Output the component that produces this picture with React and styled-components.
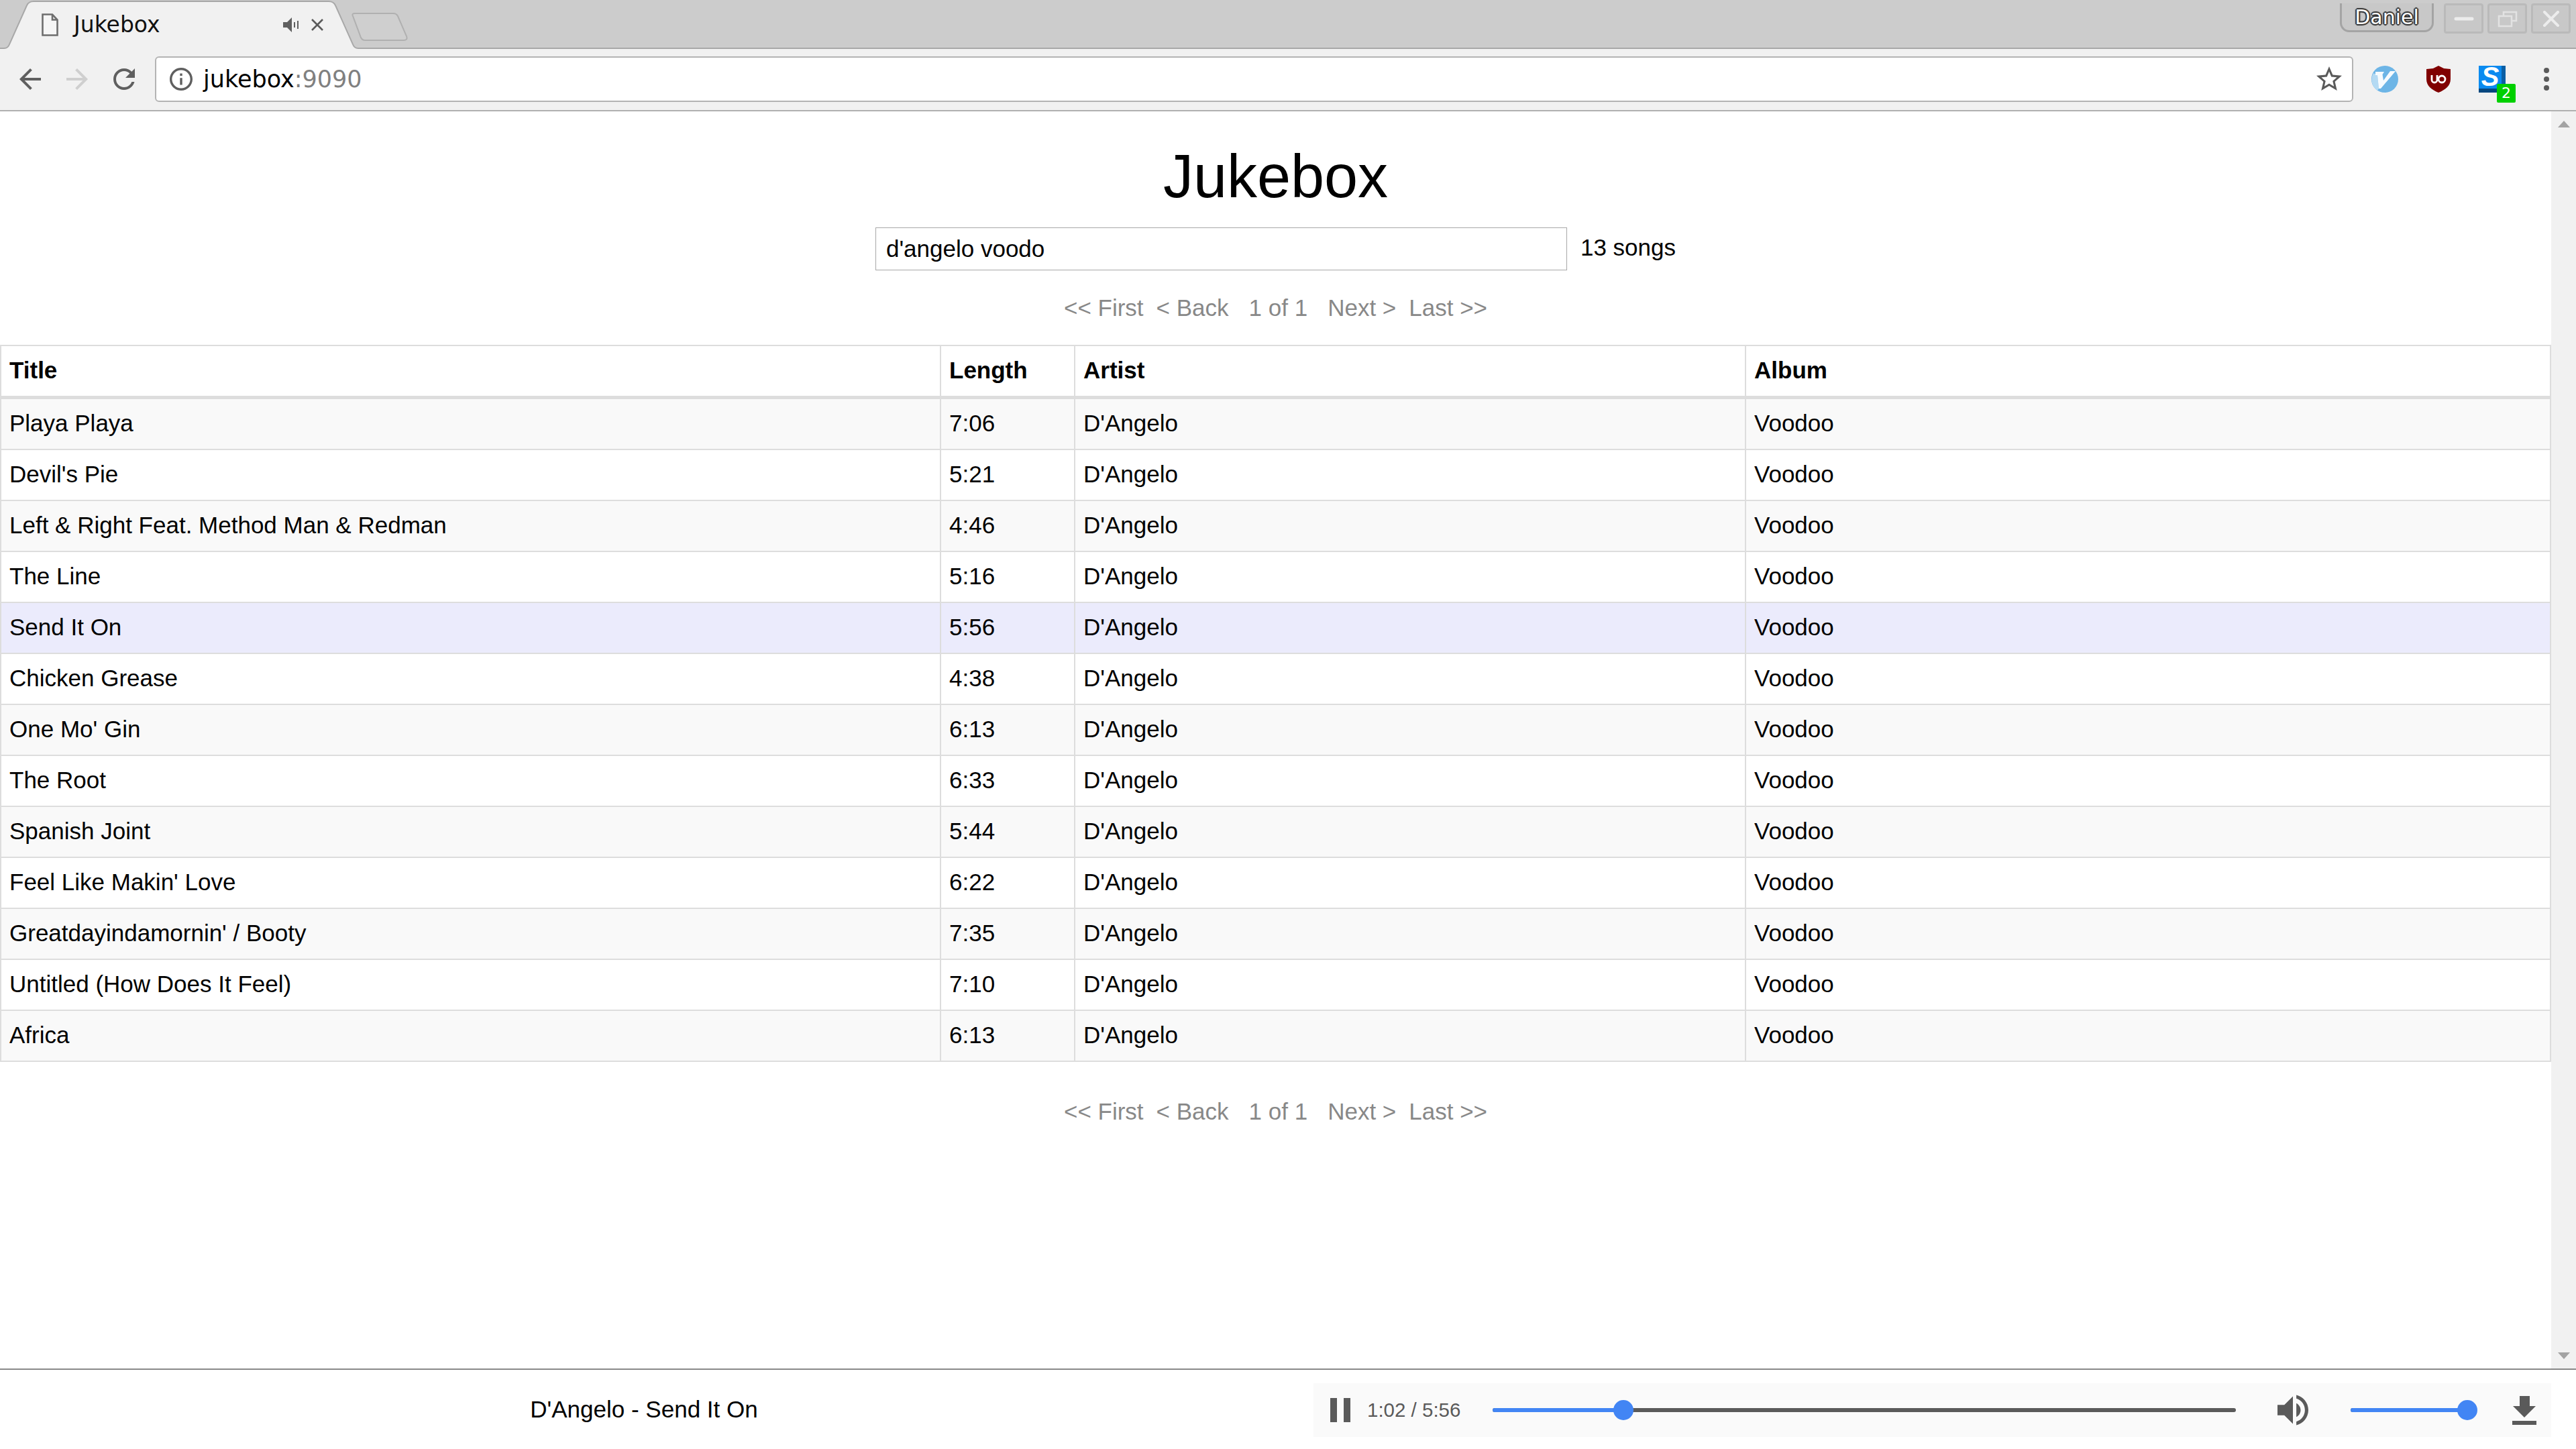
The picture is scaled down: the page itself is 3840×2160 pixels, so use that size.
import React from "react";
import styled, { createGlobalStyle } from "styled-components";

const Global = createGlobalStyle`
  html, body { margin: 0; padding: 0; background: #fff; }
  * { box-sizing: border-box; }
`;

const Shell = styled.div`
  width: 3840px;
  height: 2160px;
  display: flex;
  flex-direction: column;
  overflow: hidden;
  font-family: "Liberation Sans", Arial, sans-serif;
  font-size: 35px;
  color: #000;
`;

/* ---- Browser chrome ---- */
const TabStrip = styled.div`
  height: 73px;
  flex: none;
  display: flex;
  align-items: flex-start;
  background: #cccccc;
  border-bottom: 2px solid #a8a8a8;
  font-family: "DejaVu Sans", sans-serif;
`;
const Tab = styled.div`
  position: relative;
  width: 540px;
  height: 73px;
  flex: none;
  display: flex;
  align-items: center;
  padding: 0 0 0 62px;
`;
const TabShape = styled.svg`
  position: absolute;
  left: 0;
  top: 0;
  width: 540px;
  height: 74px;
`;
const FaviconIcon = styled.svg`
  position: relative;
  width: 25px;
  height: 34px;
  margin: 0 23px 0 0;
  flex: none;
`;
const TabTitle = styled.span`
  position: relative;
  width: 312px;
  font-size: 33px;
  line-height: 40px;
  color: #111;
`;
const TabAudio = styled.svg`
  position: relative;
  width: 24px;
  height: 22px;
  flex: none;
  margin-right: 18px;
`;
const TabClose = styled.svg`
  position: relative;
  width: 18px;
  height: 18px;
  flex: none;
`;
const NewTab = styled.svg`
  width: 84px;
  height: 42px;
  margin: 19px 0 0 -16px;
  flex: none;
`;
const StripSpacer = styled.div`
  flex: 1;
`;
const ProfileBadge = styled.div`
  width: 140px;
  height: 43px;
  margin: 5px 15px 0 0;
  display: flex;
  align-items: center;
  justify-content: center;
  background: #c8c8c8;
  border: 3px solid #a4a4a4;
  border-top: none;
  border-radius: 0 0 14px 14px;
  color: #fff;
  font-size: 30px;
  text-shadow: -2px 0 1px #333, 2px 0 1px #333, 0 -2px 1px #333, 0 2px 1px #333, -1px -1px 1px #333, 1px 1px 1px #333, -1px 1px 1px #333, 1px -1px 1px #333;
`;
const WindowButtons = styled.div`
  display: flex;
  gap: 6px;
  margin: 5px 8px 0 0;
`;
const WindowButton = styled.div`
  width: 59px;
  height: 45px;
  display: flex;
  align-items: center;
  justify-content: center;
  background: #c8c8c8;
  border: 3px solid #bababa;
  border-radius: 4px;
`;
const Toolbar = styled.div`
  height: 93px;
  flex: none;
  display: flex;
  align-items: center;
  background: #f1f1f1;
  border-bottom: 2px solid #b0b0b0;
  padding: 0 0 2px 0;
  font-family: "DejaVu Sans", sans-serif;
`;
const NavIcon = styled.svg`
  width: ${(p) => p.$w}px;
  height: ${(p) => p.$w}px;
  margin-left: ${(p) => p.$ml}px;
  flex: none;
`;
const Omnibox = styled.div`
  width: 3277px;
  height: 68px;
  margin-left: 26px;
  flex: none;
  display: flex;
  align-items: center;
  padding: 0 15px 0 20px;
  background: #fff;
  border: 2px solid #b4b4b4;
  border-radius: 6px;
`;
const InfoIcon = styled.svg`
  width: 34px;
  height: 34px;
  flex: none;
`;
const UrlText = styled.span`
  flex: 1;
  margin-left: 16px;
  font-size: 35px;
  line-height: 44px;
  color: #000;
`;
const UrlPort = styled.span`
  color: #808080;
`;
const StarIcon = styled.svg`
  width: 38px;
  height: 38px;
  flex: none;
`;
const ExtSlot = styled.div`
  position: relative;
  width: ${(p) => p.$w}px;
  height: 40px;
  margin-left: ${(p) => p.$ml}px;
  flex: none;
`;
const ExtIcon = styled.svg`
  display: block;
  width: 100%;
  height: 100%;
`;
const SBox = styled.div`
  width: 40px;
  height: 40px;
  display: flex;
  align-items: center;
  justify-content: center;
  background: #0a8af0;
  border-right: 6px solid #0b5fa5;
  border-bottom: 6px solid #06477f;
  color: #fff;
  font: italic bold 40px "Liberation Sans", sans-serif;
`;
const SBadge = styled.div`
  position: absolute;
  left: 27px;
  top: 27px;
  width: 28px;
  height: 28px;
  display: flex;
  align-items: center;
  justify-content: center;
  background: #00d000;
  border-radius: 2px;
  color: #fff;
  font-size: 22px;
`;
const Dots = styled.div`
  width: 8px;
  margin-left: 57px;
  display: flex;
  flex-direction: column;
  gap: 5px;
  flex: none;
`;
const Dot = styled.span`
  width: 8px;
  height: 8px;
  border-radius: 50%;
  background: #5a5a5a;
`;

/* ---- Page ---- */
const Viewport = styled.div`
  flex: 1;
  min-height: 0;
  display: flex;
`;
const Page = styled.main`
  width: 3803px;
  flex: none;
  background: #fff;
`;
const Heading = styled.h1`
  margin: 47px 0 26px;
  font-size: 90px;
  line-height: 100px;
  font-weight: 400;
  text-align: center;
`;
const SearchRow = styled.div`
  display: flex;
  justify-content: center;
  align-items: center;
  gap: 20px;
`;
const SearchInput = styled.input`
  width: 1031px;
  height: 64px;
  padding: 0 15px;
  border: 1px solid #a8a8a8;
  background: #fff;
  color: #000;
  font: 35px "Liberation Sans", sans-serif;
  outline: none;
`;
const SongCount = styled.span`
  line-height: 40px;
  margin-top: -4px;
`;
const Pager = styled.nav`
  height: 111px;
  margin-top: ${(p) => (p.$bottom ? 18 : 0)}px;
  display: flex;
  justify-content: center;
  align-items: center;
  gap: 19px;
  color: #888;
`;
const PagerNum = styled.span`
  padding: 0 11px;
`;
const SongTable = styled.table`
  width: 3803px;
  table-layout: fixed;
  border-collapse: separate;
  border-spacing: 0;
  border-top: 2px solid #ddd;
  border-left: 2px solid #ddd;
`;
const HeadCell = styled.th`
  height: 79px;
  padding: 0 12px 2px;
  text-align: left;
  font-weight: 700;
  border-right: 2px solid #ddd;
  border-bottom: 5px solid #ddd;
`;
const Row = styled.tr`
  background: ${(p) => (p.$active ? "#ebebfc" : p.$odd ? "#f9f9f9" : "#fff")};
`;
const Cell = styled.td`
  height: 76px;
  padding: 0 12px 2px;
  border-right: 2px solid #ddd;
  border-bottom: 2px solid #ddd;
`;

/* ---- Scrollbar ---- */
const Scrollbar = styled.div`
  width: 37px;
  flex: none;
  display: flex;
  flex-direction: column;
  justify-content: space-between;
  align-items: center;
  padding: 14px 0;
  background: #f1f1f1;
`;
const ScrollArrow = styled.svg`
  width: 18px;
  height: 10px;
`;

/* ---- Player ---- */
const PlayerBar = styled.footer`
  height: 120px;
  flex: none;
  display: flex;
  align-items: center;
  border-top: 2px solid #888;
  background: #fff;
  padding-top: 2px;
`;
const NowPlaying = styled.div`
  width: 1958px;
  flex: none;
  padding: 0 38px 3px 0;
  text-align: center;
`;
const Controls = styled.div`
  width: 1845px;
  height: 80px;
  flex: none;
  display: flex;
  align-items: center;
  padding-left: 25px;
  background: #fafafa;
`;
const PauseIcon = styled.svg`
  width: 30px;
  height: 36px;
  flex: none;
`;
const TimeText = styled.span`
  width: 145px;
  margin-left: 25px;
  flex: none;
  font-size: 29.5px;
  color: #5a5a5a;
  white-space: nowrap;
`;
const Slider = styled.div`
  position: relative;
  width: ${(p) => p.$w}px;
  height: 6px;
  margin-left: ${(p) => p.$ml}px;
  flex: none;
  border-radius: 3px;
  background: #5a5a5a;
`;
const SliderFill = styled.div`
  height: 6px;
  border-radius: 3px;
  background: #4285f4;
`;
const SliderThumb = styled.div`
  position: absolute;
  top: -12px;
  width: 30px;
  height: 30px;
  margin-left: -15px;
  border-radius: 50%;
  background: #4285f4;
`;
const VolumeIcon = styled.svg`
  width: 46px;
  height: 46px;
  margin-left: 62px;
  flex: none;
`;
const DownloadIcon = styled.svg`
  width: 36px;
  height: 43px;
  margin-left: 62px;
  flex: none;
`;

const songs = [
  ["Playa Playa", "7:06"],
  ["Devil's Pie", "5:21"],
  ["Left & Right Feat. Method Man & Redman", "4:46"],
  ["The Line", "5:16"],
  ["Send It On", "5:56"],
  ["Chicken Grease", "4:38"],
  ["One Mo' Gin", "6:13"],
  ["The Root", "6:33"],
  ["Spanish Joint", "5:44"],
  ["Feel Like Makin' Love", "6:22"],
  ["Greatdayindamornin' / Booty", "7:35"],
  ["Untitled (How Does It Feel)", "7:10"],
  ["Africa", "6:13"],
];

const PagerRow = ({ bottom }) => (
  <Pager $bottom={bottom}>
    <span>&lt;&lt; First</span>
    <span>&lt; Back</span>
    <PagerNum>1 of 1</PagerNum>
    <span>Next &gt;</span>
    <span>Last &gt;&gt;</span>
  </Pager>
);

const SeekSlider = ({ width, ml, value }) => (
  <Slider $w={width} $ml={ml}>
    <SliderFill style={{ width: `${value * 100}%` }} />
    <SliderThumb style={{ left: `${value * 100}%` }} />
  </Slider>
);

export default function App() {
  return (
    <Shell>
      <Global />
      <TabStrip>
        <Tab>
          <TabShape viewBox="0 0 540 74">
            <path d="M0 72 H6 Q12 72 14 66 L40 8 Q43 2 50 2 H490 Q497 2 500 8 L526 66 Q528 72 534 72 H540 V74 H0 Z" fill="#f1f1f1" />
            <path d="M0 72 H6 Q12 72 14 66 L40 8 Q43 2 50 2 H490 Q497 2 500 8 L526 66 Q528 72 534 72 H540" fill="none" stroke="#a8a8a8" strokeWidth="2" />
          </TabShape>
          <FaviconIcon viewBox="0 0 25 34">
            <path d="M1.5 1.5H16L23.5 9.5V32.5H1.5Z M16 1.5V9.5H23.5" fill="#f6f6f6" stroke="#6e6e6e" strokeWidth="2.6" />
          </FaviconIcon>
          <TabTitle>Jukebox</TabTitle>
          <TabAudio viewBox="0 0 24 22">
            <path d="M0 7H6L13 0V22L6 15H0Z" fill="#5f5f5f" />
            <path d="M17 7V15M22 5V17" stroke="#5f5f5f" strokeWidth="2" />
          </TabAudio>
          <TabClose viewBox="0 0 18 18">
            <path d="M1 1L17 17M17 1L1 17" stroke="#5a5a5a" strokeWidth="2.6" />
          </TabClose>
        </Tab>
        <NewTab viewBox="0 0 84 42">
          <path d="M2 5Q0 1 5 1H62Q67 1 69 5L82 35Q84 41 78 41H20Q16 41 14 37Z" fill="#cfcfcf" stroke="#b0b0b0" strokeWidth="2" />
        </NewTab>
        <StripSpacer />
        <ProfileBadge>Daniel</ProfileBadge>
        <WindowButtons>
          <WindowButton>
            <svg width="30" height="10" viewBox="0 0 30 10">
              <path d="M3 5H27" stroke="#ececec" strokeWidth="5" strokeLinecap="round" />
            </svg>
          </WindowButton>
          <WindowButton>
            <svg width="30" height="26" viewBox="0 0 30 26">
              <path d="M9 8V3H28V16H22" fill="none" stroke="#e2e2e2" strokeWidth="2.6" />
              <path d="M2 9H21V24H2Z" fill="none" stroke="#e2e2e2" strokeWidth="2.6" />
            </svg>
          </WindowButton>
          <WindowButton>
            <svg width="26" height="24" viewBox="0 0 26 24">
              <path d="M3 2L23 22M23 2L3 22" stroke="#ececec" strokeWidth="4" strokeLinecap="round" />
            </svg>
          </WindowButton>
        </WindowButtons>
      </TabStrip>
      <Toolbar>
        <NavIcon $w={40} $ml={25} viewBox="2 2 20 20" fill="#5f5f5f">
          <path d="M20 11H7.83l5.59-5.59L12 4l-8 8 8 8 1.41-1.41L7.83 13H20v-2z" />
        </NavIcon>
        <NavIcon $w={40} $ml={30} viewBox="2 2 20 20" fill="#cfcfcf">
          <path d="M4 11h12.17l-5.59-5.59L12 4l8 8-8 8-1.41-1.41L16.17 13H4v-2z" />
        </NavIcon>
        <NavIcon $w={40} $ml={30} viewBox="2 2 20 20" fill="#5f5f5f">
          <path d="M17.65 6.35C16.2 4.9 14.21 4 12 4c-4.42 0-7.99 3.58-7.99 8s3.57 8 7.99 8c3.73 0 6.84-2.55 7.73-6h-2.08c-.82 2.33-3.04 4-5.65 4-3.31 0-6-2.69-6-6s2.69-6 6-6c1.66 0 3.14.69 4.22 1.78L13 11h7V4l-2.35 2.35z" />
        </NavIcon>
        <Omnibox>
          <InfoIcon viewBox="2 2 20 20" fill="#5f5f5f">
            <path d="M11 7h2v2h-2zm0 4h2v6h-2zm1-9C6.48 2 2 6.48 2 12s4.48 10 10 10 10-4.48 10-10S17.52 2 12 2zm0 18c-4.41 0-8-3.59-8-8s3.59-8 8-8 8 3.59 8 8-3.59 8-8 8z" />
          </InfoIcon>
          <UrlText>
            jukebox<UrlPort>:9090</UrlPort>
          </UrlText>
          <StarIcon viewBox="2 2 20 20" fill="#5a5a5a">
            <path d="M22 9.24l-7.19-.62L12 2 9.19 8.63 2 9.24l5.46 4.73L5.82 21 12 17.27 18.18 21l-1.63-7.03L22 9.24zM12 15.4l-3.76 2.27 1-4.28-3.32-2.88 4.38-.38L12 6.1l1.71 4.04 4.38.38-3.32 2.88 1 4.28L12 15.4z" />
          </StarIcon>
        </Omnibox>
        <ExtSlot $w={40} $ml={27}>
          <ExtIcon viewBox="0 0 40 40">
            <circle cx="20" cy="20" r="20" fill="#6db5e6" />
            <path d="M3 11L9 14L11 34L9 37A20 20 0 0 1 3 11Z" fill="#b4daf3" />
            <path d="M6 9H19L16.5 13L18 22L28 8H36L14 34H11L9 14H6Z" fill="#fff" opacity="0.95" />
          </ExtIcon>
        </ExtSlot>
        <ExtSlot $w={36} $ml={42}>
          <ExtIcon viewBox="0 0 36 40">
            <path d="M18 0L26 4L36 5V20C36 30 28 36 18 40C8 36 0 30 0 20V5L10 4Z" fill="#800000" />
            <path d="M8 14V21A4 4 0 0 0 16 21V14" fill="none" stroke="#fff" strokeWidth="2.8" />
            <circle cx="23" cy="20" r="5" fill="none" stroke="#fff" strokeWidth="2.8" />
          </ExtIcon>
        </ExtSlot>
        <ExtSlot $w={40} $ml={42}>
          <SBox>S</SBox>
          <SBadge>2</SBadge>
        </ExtSlot>
        <Dots>
          <Dot />
          <Dot />
          <Dot />
        </Dots>
      </Toolbar>
      <Viewport>
        <Page>
          <Heading>Jukebox</Heading>
          <SearchRow>
            <SearchInput readOnly value="d'angelo voodo" />
            <SongCount>13 songs</SongCount>
          </SearchRow>
          <PagerRow />
          <SongTable>
            <colgroup>
              <col style={{ width: 1401 }} />
              <col style={{ width: 200 }} />
              <col style={{ width: 1000 }} />
              <col style={{ width: 1200 }} />
            </colgroup>
            <thead>
              <tr>
                <HeadCell>Title</HeadCell>
                <HeadCell>Length</HeadCell>
                <HeadCell>Artist</HeadCell>
                <HeadCell>Album</HeadCell>
              </tr>
            </thead>
            <tbody>
              {songs.map(([title, length], i) => (
                <Row key={title} $odd={i % 2 === 0} $active={title === "Send It On"}>
                  <Cell>{title}</Cell>
                  <Cell>{length}</Cell>
                  <Cell>D'Angelo</Cell>
                  <Cell>Voodoo</Cell>
                </Row>
              ))}
            </tbody>
          </SongTable>
          <PagerRow bottom />
        </Page>
        <Scrollbar>
          <ScrollArrow viewBox="0 0 18 10">
            <path d="M9 0L18 10H0Z" fill="#a3a3a3" />
          </ScrollArrow>
          <ScrollArrow viewBox="0 0 18 10">
            <path d="M0 0H18L9 10Z" fill="#a3a3a3" />
          </ScrollArrow>
        </Scrollbar>
      </Viewport>
      <PlayerBar>
        <NowPlaying>D'Angelo - Send It On</NowPlaying>
        <Controls>
          <PauseIcon viewBox="0 0 30 36">
            <path d="M0 0H10V36H0ZM20 0H30V36H20Z" fill="#5a5a5a" />
          </PauseIcon>
          <TimeText>1:02 / 5:56</TimeText>
          <SeekSlider width={1108} ml={42} value={0.176} />
          <VolumeIcon viewBox="3 3 18 18" fill="#5a5a5a">
            <path d="M3 9v6h4l5 5V4L7 9H3zm13.5 3c0-1.77-1.02-3.29-2.5-4.03v8.05c1.48-.73 2.5-2.25 2.5-4.02zM14 3.23v2.06c2.89.86 5 3.54 5 6.71s-2.11 5.85-5 6.71v2.06c4.01-.91 7-4.49 7-8.77s-2.99-7.86-7-8.77z" />
          </VolumeIcon>
          <SeekSlider width={179} ml={63} value={0.97} />
          <DownloadIcon viewBox="0 0 36 43">
            <path d="M11 0H26V15H35L18 32L1 15H11ZM0 37H36V43H0Z" fill="#5a5a5a" />
          </DownloadIcon>
        </Controls>
      </PlayerBar>
    </Shell>
  );
}
